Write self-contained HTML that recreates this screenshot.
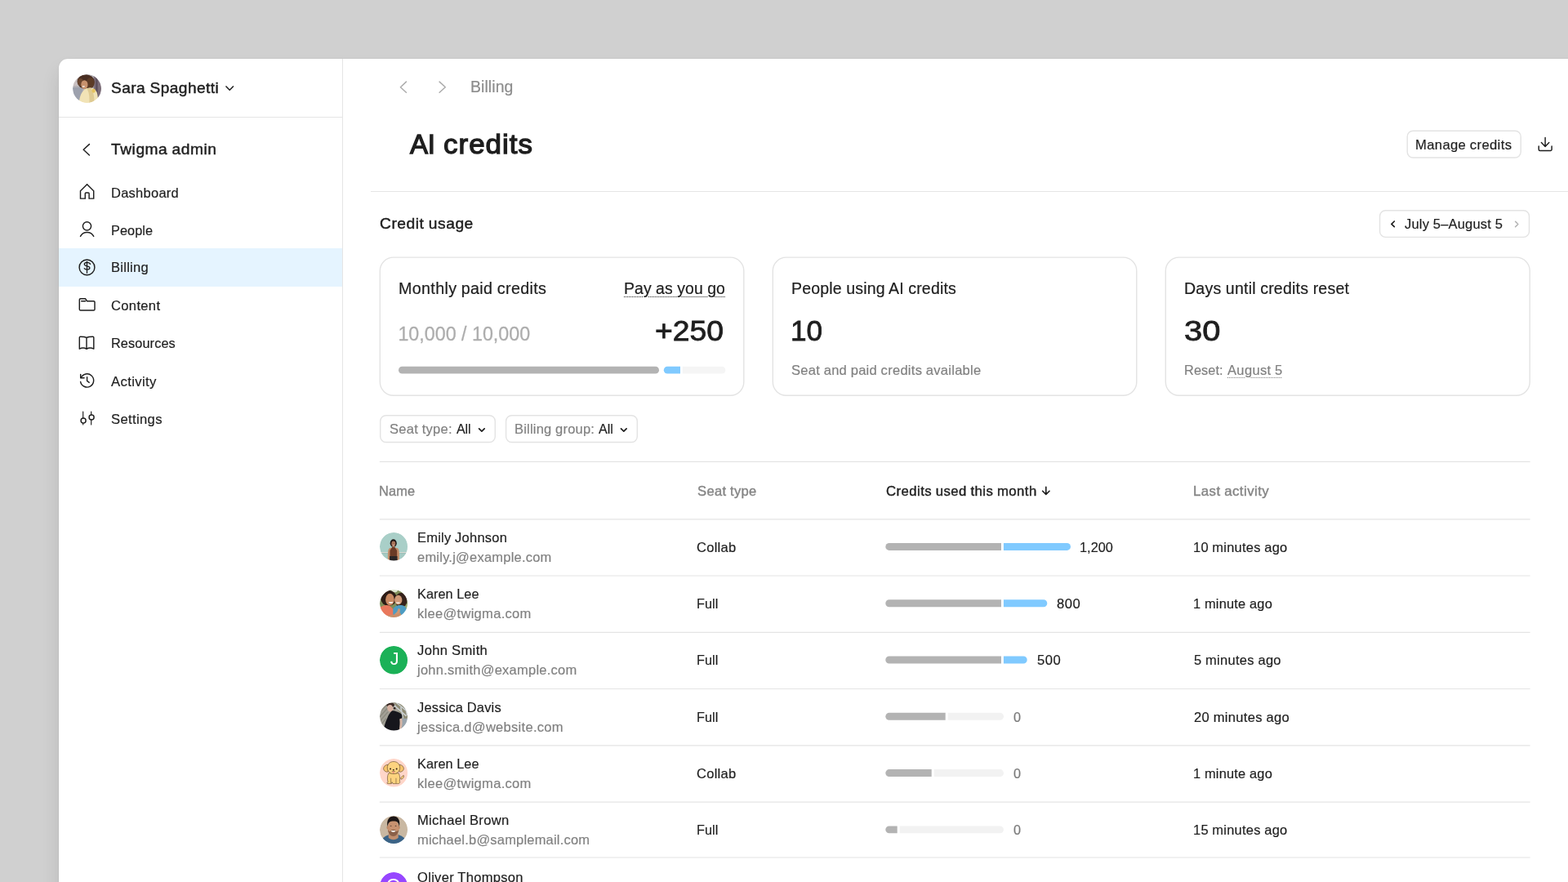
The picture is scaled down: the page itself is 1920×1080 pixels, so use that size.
<!DOCTYPE html>
<html lang="en">
<head>
<meta charset="utf-8">
<title>AI credits – Billing – Twigma admin</title>
<style>
*{box-sizing:border-box;margin:0;padding:0}
html,body{width:1920px;height:1080px;overflow:hidden;background:#d0d0d0}
body{font-family:"Liberation Sans",sans-serif;color:#1e1e1e;position:relative;-webkit-font-smoothing:antialiased}
#app{will-change:transform;position:absolute;left:0;top:0;width:1920px;height:1080px;overflow:hidden}
#app *{position:absolute}
.t{white-space:nowrap;line-height:1;font-weight:400;transform-origin:0 0}
.win{background:#fff;border-top-left-radius:11px;box-shadow:0 14px 22px rgba(0,0,0,.11),0 0 1.5px rgba(0,0,0,.14)}
.hl{background:#e5e5e5}
.vl{background:#e5e5e5}
.sel{background:#e5f4ff}
.btn{border:0;border-radius:6px;background:transparent;font:inherit;color:inherit;overflow:visible}
.card{border:1px solid #e6e6e6;border-radius:16px;background:#fff}
.av{border-radius:50%;overflow:hidden;display:block}
.bar{border-radius:5px}
svg{overflow:visible}
svg *{position:static}
.ic{fill:none;stroke:#1e1e1e;stroke-width:1.45;stroke-linecap:round;stroke-linejoin:round}
.bx{fill:#fff;stroke:#e3e3e3;stroke-width:1.4}
.ln{fill:none;stroke:#e4e4e4;stroke-width:1.2}
.cr{stroke:#ababab}
.u{text-decoration:underline dotted;text-decoration-thickness:1px;text-underline-offset:3px}
ul,li{list-style:none}
.g{left:0;top:0;width:1920px;height:1080px}
a{text-decoration:none;color:inherit}
h1,h2,h3{font-weight:400}
</style>
</head>
<body>
<div id="app">
<svg width="0" height="0" style="left:0;top:0"><defs><filter id="soft" x="-10%" y="-10%" width="120%" height="120%"><feGaussianBlur stdDeviation="0.45"/></filter></defs></svg>
<div class="win" style="left:72.00px;top:72.00px;width:1888.00px;height:1048.00px;"></div>
<aside class="g">
<div class="vl" style="left:419.00px;top:72.00px;width:1.00px;height:1008.00px;"></div>
<div class="hl" style="left:72.00px;top:143.00px;width:347.00px;height:1.00px;"></div>
<header class="g">
<svg class="av" role="img" aria-label="Sara Spaghetti" style="left:89.00px;top:90.50px;width:35.2px;height:35.2px" viewBox="0 0 35 35"><clipPath id="cSar108"><circle cx="17.5" cy="17.5" r="17.5"/></clipPath><g clip-path="url(#cSar108)"><g filter="url(#soft)"><rect x="-2" y="-2" width="39" height="39" fill="#b3afb4"/><rect x="-2" y="-2" width="14" height="16" fill="#c9c0c1"/><rect x="-2" y="16" width="14" height="21" fill="#9da1ad"/><rect x="25.500" y="-2" width="12" height="39" fill="#7b6d78"/><rect x="28" y="4" width="2.500" height="31" fill="#5d4f5c"/><ellipse cx="16" cy="9" rx="10.5" ry="8.8" fill="#4a2f22"/><ellipse cx="21.500" cy="10.500" rx="5" ry="6.500" fill="#5b3a28"/><ellipse cx="9.5" cy="9.5" rx="3.6" ry="4.6" fill="#6a452f"/><ellipse cx="14.300" cy="12.6" rx="4.1" ry="5.4" fill="#c8926e"/><ellipse cx="13.2" cy="14.8" rx="1.7" ry=".8" fill="#f3e6de"/><path d="M7.500 37 C8 27 11 20 17 17 C22 15.500 27 17 29.500 22 C31 27 31 32 30.500 37 Z" fill="#f1e3b6"/><path d="M17 17.500 C20 21 21 28 20 37 L26 37 C27 28 25 20 22 16.500 Z" fill="#dfcb93"/><ellipse cx="25.500" cy="20" rx="2.2" ry="2.6" fill="#e6c35e"/></g></g></svg>
<span class="t" style="left:136.43px;top:99.00px;font-size:18.6px;letter-spacing:0.426px;word-spacing:-0.426px;transform:scaleX(1.0287);-webkit-text-stroke:0.45px #1e1e1e;">Sara Spaghetti</span>
<svg class="ic" style="left:0;top:0;" width="1920" height="1080" viewBox="0 0 1920 1080"><path d="M277 105.9 L281.2 110.2 L285.4 105.9" stroke-width="1.5"/></svg>
</header>
<nav class="g">
<svg class="ic" style="left:0;top:0;" width="1920" height="1080" viewBox="0 0 1920 1080"><path d="M109.4 176.6 L102.2 183.3 L109.4 190"/></svg>
<h2 class="t" style="left:136.23px;top:174.00px;font-size:18.6px;letter-spacing:0.531px;word-spacing:-0.531px;transform:scaleX(1.0304);-webkit-text-stroke:0.45px #1e1e1e;">Twigma admin</h2>
<div class="sel" style="left:72.00px;top:304.30px;width:347.00px;height:46.30px;"></div>
<a class="t" style="left:135.78px;top:228.00px;font-size:16.2px;letter-spacing:0.259px;transform:scaleX(1.0182);-webkit-text-stroke:0.18px #1e1e1e;">Dashboard</a>
<a class="t" style="left:135.79px;top:274.00px;font-size:16.2px;letter-spacing:0.085px;transform:scaleX(1.0057);-webkit-text-stroke:0.18px #1e1e1e;">People</a>
<a class="t" style="left:135.78px;top:319.00px;font-size:16.2px;letter-spacing:0.237px;transform:scaleX(1.0234);-webkit-text-stroke:0.18px #1e1e1e;">Billing</a>
<a class="t" style="left:135.80px;top:366.00px;font-size:16.2px;letter-spacing:0.324px;transform:scaleX(1.0231);-webkit-text-stroke:0.18px #1e1e1e;">Content</a>
<a class="t" style="left:135.79px;top:412.00px;font-size:16.2px;letter-spacing:0.099px;transform:scaleX(1.0070);-webkit-text-stroke:0.18px #1e1e1e;">Resources</a>
<a class="t" style="left:135.80px;top:459.00px;font-size:16.2px;letter-spacing:0.348px;transform:scaleX(1.0320);-webkit-text-stroke:0.18px #1e1e1e;">Activity</a>
<a class="t" style="left:135.80px;top:505.00px;font-size:16.2px;letter-spacing:0.331px;transform:scaleX(1.0271);-webkit-text-stroke:0.18px #1e1e1e;">Settings</a>
<svg class="ic" style="left:0;top:0;" width="1920" height="1080" viewBox="0 0 1920 1080"><path d="M98.5 243.1 V233.7 L106.6 225.7 L114.7 233.7 V243.1 H109.1 V237 a1 1 0 0 0 -1 -1 h-2.800 a1 1 0 0 0 -1 1 V243.1 Z" stroke-linejoin="miter"/><circle cx="106.5" cy="276.8" r="5.1"/><path d="M98.500 289.3 A9.2 9.2 0 0 1 114.700 289.3"/><circle cx="106.5" cy="327.400" r="9.400"/><path d="M106.500 320.300 V334.300" stroke-width="1.300"/><path d="M110.600 323.500 C110.100 322.100 108.500 321.300 106.600 321.300 C104.600 321.300 103.300 322.200 103.300 323.500 C103.300 324.900 104.600 325.400 106.600 325.800 C108.600 326.200 109.900 326.800 109.900 328.100 C109.900 329.300 108.600 330.100 106.600 330.100 C105.100 330.100 103.800 329.600 103.200 328.700" stroke-width="1.300"/><path d="M97.300 367.100 a1.300 1.300 0 0 1 1.300 -1.300 h5.900 l2.100 2.900 h8.100 a1.300 1.300 0 0 1 1.300 1.300 v8.700 a1.300 1.300 0 0 1 -1.300 1.300 h-16.100 a1.300 1.300 0 0 1 -1.300 -1.300 Z"/><path d="M99.700 368.700 h4.800"/><path d="M106 413.500 C104.300 412.500 101.500 412.200 98.400 412.200 C97.700 412.200 97.300 412.600 97.300 413.300 V427.200 C100 425.700 103.500 425.700 106 427.300 C108.500 425.700 112 425.700 114.800 427.200 V413.300 C114.800 412.600 114.400 412.200 113.700 412.200 C110.600 412.200 107.700 412.500 106 413.500 Z M106 413.500 V427.300"/><path d="M99.2 462.6 A8.1 8.1 0 1 1 98.6 467.4"/><path d="M98.7 458.4 V462.8 H103.1"/><path d="M106.6 461.6 V466.4 L109.2 468.4"/><path d="M101.700 504 V512 M101.700 518.200 V520 M111.700 504 V507.800 M111.700 514 V520" stroke-width="1.150"/><circle cx="102.100" cy="515.100" r="3"/><circle cx="112.100" cy="510.900" r="3"/></svg>
</nav>
</aside>
<main class="g">
<svg class="ic cr" style="left:0;top:0;" width="1920" height="1080" viewBox="0 0 1920 1080"><path d="M497.4 100.1 L490.4 106.7 L497.4 113.3"/><path d="M538.1 100.1 L545.3 106.7 L538.1 113.3"/></svg>
<span class="t" style="left:575.80px;top:97.00px;font-size:19.3px;letter-spacing:0.087px;transform:scaleX(1.0070);color:#8c8c8c;-webkit-text-stroke:0.21px #8c8c8c;">Billing</span>
<h1 class="g"><span class="t" style="left:502.04px;top:160.00px;font-size:33.4px;letter-spacing:-0.406px;transform:scaleX(0.9912);-webkit-text-stroke:1.3px #1e1e1e;">AI</span> <span class="t" style="left:542.83px;top:160.00px;font-size:33.4px;letter-spacing:1.021px;transform:scaleX(1.0435);-webkit-text-stroke:1.3px #1e1e1e;">credits</span></h1>
<svg class="bx" style="left:0;top:0;" width="1920" height="1080" viewBox="0 0 1920 1080"><rect x="1723.2" y="160.3" width="139.00" height="32.75" rx="7"/></svg>
<button class="btn" style="left:1723.00px;top:160.00px;width:140.00px;height:33.00px;"><span class="t" style="left:10.47px;top:9.00px;font-size:16.2px;letter-spacing:0.353px;word-spacing:-0.353px;transform:scaleX(1.0264);-webkit-text-stroke:0.18px #1e1e1e;">Manage credits</span></button>
<svg class="ic" style="left:0;top:0;" width="1920" height="1080" viewBox="0 0 1920 1080"><path d="M1892.1 168.5 V179.4 M1887.4 174.6 L1892.1 179.4 L1896.8 174.6"/><path d="M1884.2 178.9 V183 a1.5 1.5 0 0 0 1.5 1.5 H1898.6 a1.5 1.5 0 0 0 1.5 -1.5 V178.9"/></svg>
<div class="hl" style="left:454.00px;top:234.00px;width:1466.00px;height:1.00px;"></div>
<h2 class="t" style="left:465.03px;top:265.00px;font-size:18.6px;letter-spacing:0.515px;word-spacing:-0.515px;transform:scaleX(1.0336);-webkit-text-stroke:0.45px #1e1e1e;">Credit usage</h2>
<svg class="bx" style="left:0;top:0;" width="1920" height="1080" viewBox="0 0 1920 1080"><rect x="1689.55" y="257.8" width="182.95" height="32.60" rx="7"/></svg>
<div class="btn" style="left:1689.00px;top:257.00px;width:184.00px;height:34.00px;"><span class="t" style="left:31.49px;top:9.00px;font-size:16.2px;letter-spacing:0.228px;word-spacing:-0.228px;transform:scaleX(1.0161);-webkit-text-stroke:0.18px #1e1e1e;">July 5–August 5</span></div>
<svg class="ic" style="left:0;top:0;" width="1920" height="1080" viewBox="0 0 1920 1080"><path d="M1707.3 271 L1703.9 274.3 L1707.3 277.6" stroke-width="1.7"/><path d="M1855.6 271.3 L1858.8 274.5 L1855.6 277.7" stroke-width="1.6" stroke="#b3b3b3"/></svg>
<svg class="bx" style="left:0;top:0;" width="1920" height="1080" viewBox="0 0 1920 1080"><rect x="465.30" y="315.10" width="445.50" height="169.20" rx="16.5"/><rect x="946.30" y="315.10" width="445.50" height="169.20" rx="16.5"/><rect x="1427.30" y="315.10" width="445.90" height="169.20" rx="16.5"/></svg>
<span class="t" style="left:488.18px;top:344.00px;font-size:19.3px;letter-spacing:0.323px;word-spacing:-0.323px;transform:scaleX(1.0220);-webkit-text-stroke:0.21px #1e1e1e;">Monthly paid credits</span>
<span class="t u" style="left:763.80px;top:344.00px;font-size:19.3px;letter-spacing:0.107px;word-spacing:-0.107px;transform:scaleX(1.0054);-webkit-text-stroke:0.21px #1e1e1e;">Pay as you go</span>
<span class="t" style="left:487.43px;top:398.00px;font-size:23.3px;letter-spacing:-0.017px;word-spacing:0.017px;color:#adadad;-webkit-text-stroke:0.26px #adadad;">10,000 / 10,000</span>
<span class="t" style="left:801.88px;top:388.00px;font-size:35.9px;transform:scaleX(1.0391);-webkit-text-stroke:0.8px #1e1e1e;">+250</span>
<svg class="bars" style="left:0;top:0;" width="1920" height="1080" viewBox="0 0 1920 1080"><path d="M492.35 448.80 H802.65 A4.35 4.35 0 0 1 802.65 457.50 H492.35 A4.35 4.35 0 0 1 492.35 448.80 Z" fill="#b3b3b3"/><path d="M835.80 448.80 H883.95 A4.35 4.35 0 0 1 883.95 457.50 H835.80 V448.80 Z" fill="#f5f5f5"/><path d="M817.15 448.80 H833.00 V457.50 H817.15 A4.35 4.35 0 0 1 817.15 448.80 Z" fill="#80caff"/></svg>
<span class="t" style="left:969.19px;top:344.00px;font-size:19.3px;letter-spacing:0.176px;word-spacing:-0.176px;transform:scaleX(1.0115);-webkit-text-stroke:0.21px #1e1e1e;">People using AI credits</span>
<span class="t" style="left:968.13px;top:388.00px;font-size:35.9px;transform:scaleX(0.9799);-webkit-text-stroke:0.8px #1e1e1e;">10</span>
<span class="t" style="left:969.39px;top:445.00px;font-size:16.2px;letter-spacing:0.265px;word-spacing:-0.265px;transform:scaleX(1.0213);color:#808080;-webkit-text-stroke:0.18px #808080;">Seat and paid credits available</span>
<span class="t" style="left:1450.29px;top:344.00px;font-size:19.3px;letter-spacing:0.205px;word-spacing:-0.205px;transform:scaleX(1.0142);-webkit-text-stroke:0.21px #1e1e1e;">Days until credits reset</span>
<span class="t" style="left:1450.23px;top:388.00px;font-size:35.9px;transform:scaleX(1.1120);-webkit-text-stroke:0.8px #1e1e1e;">30</span>
<span class="t" style="left:1449.78px;top:445.00px;font-size:16.2px;letter-spacing:0.099px;transform:scaleX(1.0073);color:#808080;-webkit-text-stroke:0.18px #808080;">Reset:</span>
<span class="t u" style="left:1503.39px;top:445.00px;font-size:16.2px;letter-spacing:0.326px;word-spacing:-0.326px;transform:scaleX(1.0208);color:#808080;-webkit-text-stroke:0.18px #808080;">August 5</span>
<svg class="bx" style="left:0;top:0;" width="1920" height="1080" viewBox="0 0 1920 1080"><rect x="465.7" y="508.7" width="140.60" height="32.80" rx="7"/><rect x="619.6" y="508.7" width="160.70" height="32.80" rx="7"/></svg>
<button class="btn" style="left:465.00px;top:508.00px;width:142.00px;height:34.00px;"><span class="t" style="left:11.79px;top:9.00px;font-size:16.2px;letter-spacing:0.274px;word-spacing:-0.274px;transform:scaleX(1.0205);color:#808080;-webkit-text-stroke:0.18px #808080;">Seat type:</span> <span class="t" style="left:93.79px;top:9.00px;font-size:16.2px;letter-spacing:-0.144px;transform:scaleX(0.9892);-webkit-text-stroke:0.18px #1e1e1e;">All</span></button>
<button class="btn" style="left:619.00px;top:508.00px;width:162.00px;height:34.00px;"><span class="t" style="left:10.87px;top:9.00px;font-size:16.2px;letter-spacing:0.208px;word-spacing:-0.208px;transform:scaleX(1.0184);color:#808080;-webkit-text-stroke:0.18px #808080;">Billing group:</span> <span class="t" style="left:114.39px;top:9.00px;font-size:16.2px;letter-spacing:-0.082px;transform:scaleX(0.9938);-webkit-text-stroke:0.18px #1e1e1e;">All</span></button>
<svg class="ic" style="left:0;top:0;" width="1920" height="1080" viewBox="0 0 1920 1080"><path d="M586.600 524.9 L589.900 528.2 L593.200 524.9" stroke-width="1.700"/><path d="M760.500 524.9 L763.800 528.2 L767.100 524.9" stroke-width="1.700"/></svg>
<svg class="ln" style="left:0;top:0;" width="1920" height="1080" viewBox="0 0 1920 1080"><path d="M464.8 565.3 H1873.6" /><path d="M464.8 635.83 H1873.6"/><path d="M464.8 705.00 H1873.6"/><path d="M464.8 774.40 H1873.6"/><path d="M464.8 843.50 H1873.6"/><path d="M464.8 912.90 H1873.6"/><path d="M464.8 982.10 H1873.6"/><path d="M464.8 1050.00 H1873.6"/></svg>
<div class="g" role="table">
<div class="g" role="row">
<span class="t" style="left:464.49px;top:593.00px;font-size:16.2px;letter-spacing:0.165px;transform:scaleX(1.0078);color:#858585;-webkit-text-stroke:0.39px #858585;">Name</span>
<span class="t" style="left:854.20px;top:593.00px;font-size:16.2px;letter-spacing:0.328px;word-spacing:-0.328px;transform:scaleX(1.0228);color:#858585;-webkit-text-stroke:0.39px #858585;">Seat type</span>
<span class="t" style="left:1085.20px;top:593.00px;font-size:16.2px;letter-spacing:0.433px;word-spacing:-0.433px;transform:scaleX(1.0334);-webkit-text-stroke:0.39px #1e1e1e;">Credits used this month</span>
<svg class="ic" style="left:0;top:0;" width="1920" height="1080" viewBox="0 0 1920 1080"><path d="M1280.800 596.300 V605.300 M1276.600 601.200 L1280.800 605.400 L1285 601.200" stroke-width="1.600"/></svg>
<span class="t" style="left:1461.46px;top:593.00px;font-size:16.2px;letter-spacing:0.428px;word-spacing:-0.428px;transform:scaleX(1.0384);color:#858585;-webkit-text-stroke:0.39px #858585;">Last activity</span>
</div>
<div class="g" role="row">
<svg class="av" role="img" aria-label="Emily" style="left:464.85px;top:652.38px;width:34.6px;height:34.6px" viewBox="0 0 35 35"><clipPath id="cEmi669"><circle cx="17.5" cy="17.5" r="17.5"/></clipPath><g clip-path="url(#cEmi669)"><g filter="url(#soft)"><rect x="-2" y="-2" width="39" height="39" fill="#a9cfc8"/><rect x="-2" y="24.300" width="39" height=".9" fill="#eadfd9"/><rect x="-2" y="25.200" width="39" height=".8" fill="#8eb3ab"/><rect x="-2" y="26" width="39" height="11" fill="#a5cac3"/><path d="M10.200 36 C9.8 28 9.8 22 11.5 20 C13 18.700 15 18.600 17 18.600 C19 18.600 21.500 18.700 22.800 20 C24.500 22 24.300 28 24 36 Z" fill="#c38c68"/><ellipse cx="16.900" cy="13.300" rx="4.100" ry="4.900" fill="#1f1714"/><ellipse cx="17" cy="14" rx="2.500" ry="3.300" fill="#a8745a"/><ellipse cx="17" cy="15.700" rx="1.200" ry=".5" fill="#ecd9cf"/><rect x="15.700" y="16.500" width="2.600" height="3" fill="#b07a5c"/><path d="M12.600 29.800 V22.500 C13.500 21 14.800 19.500 15.300 18.300 H18.700 C19.200 19.500 20.500 21 21.400 22.500 V29.800 Z" fill="#6b3a28"/><path d="M12.200 29.400 H21.700 L22 36 H12 Z" fill="#2a2726"/></g></g></svg>
<span class="t" style="left:511.08px;top:650.00px;font-size:16.2px;letter-spacing:0.244px;word-spacing:-0.244px;transform:scaleX(1.0176);-webkit-text-stroke:0.18px #1e1e1e;">Emily Johnson</span>
<span class="t" style="left:511.10px;top:674.00px;font-size:16.2px;letter-spacing:0.227px;transform:scaleX(1.0177);color:#808080;-webkit-text-stroke:0.18px #808080;">emily.j@example.com</span>
<span class="t" style="left:853.40px;top:662.00px;font-size:16.2px;letter-spacing:0.273px;transform:scaleX(1.0202);-webkit-text-stroke:0.18px #1e1e1e;">Collab</span>
<svg class="bars" style="left:0;top:0;" width="1920" height="1080" viewBox="0 0 1920 1080"><path d="M1088.75 665.03 H1226.00 V673.93 H1088.75 A4.45 4.45 0 0 1 1088.75 665.03 Z" fill="#b3b3b3"/><path d="M1228.90 665.03 H1306.55 A4.45 4.45 0 0 1 1306.55 673.93 H1228.90 V665.03 Z" fill="#80caff"/></svg>
<span class="t" style="left:1322.39px;top:662.00px;font-size:16.2px;letter-spacing:0.047px;transform:scaleX(1.0032);-webkit-text-stroke:0.18px #1e1e1e;">1,200</span>
<span class="t" style="left:1461.37px;top:662.00px;font-size:16.2px;letter-spacing:0.243px;word-spacing:-0.243px;transform:scaleX(1.0165);-webkit-text-stroke:0.18px #1e1e1e;">10 minutes ago</span>
</div>
<div class="g" role="row">
<svg class="av" role="img" aria-label="Karen" style="left:464.85px;top:721.65px;width:34.6px;height:34.6px" viewBox="0 0 35 35"><clipPath id="cKar738"><circle cx="17.5" cy="17.5" r="17.5"/></clipPath><g clip-path="url(#cKar738)"><g filter="url(#soft)"><rect x="-2" y="-2" width="39" height="39" fill="#7f8f5a"/><ellipse cx="18" cy="1" rx="4" ry="2.500" fill="#dfe6d0"/><ellipse cx="31" cy="24" rx="5" ry="8" fill="#97a56f"/><ellipse cx="11" cy="10.500" rx="9.800" ry="9.800" fill="#2e1f18"/><ellipse cx="26.500" cy="13" rx="7.600" ry="9.200" fill="#35241b"/><ellipse cx="12.600" cy="12.300" rx="5.400" ry="7.400" fill="#c98a63"/><ellipse cx="23" cy="12.800" rx="4.700" ry="6" fill="#d09a78"/><path d="M10.800 15.300 H16.600 C16.300 17.800 11.600 17.800 10.800 15.300 Z" fill="#f7f1ec"/><path d="M20 15.600 H25.200 C24.800 17.700 20.600 17.700 20 15.600 Z" fill="#f7f1ec"/><path d="M-1 36 V23 C3 19.500 8 18.300 12 19.800 L17.600 25 V36 Z" fill="#e9785c"/><path d="M16.500 36 V24 C18 20.500 24 18.300 29 19.800 C32 21 34 25 35 29 L30 36 Z" fill="#4d9cc2"/><path d="M24.800 23.500 C26 26 25 30 22 32.500 L18 30.500 C21 28.500 22.600 26 22.800 23.500 Z" fill="#cf9773"/><path d="M5 34 C10 30.500 18 31.500 25.500 28.800 L27 32 C22 35 14 36 8 36.500 Z" fill="#c98f6b"/></g></g></svg>
<span class="t" style="left:511.10px;top:719.00px;font-size:16.2px;letter-spacing:0.069px;word-spacing:-0.069px;transform:scaleX(1.0044);-webkit-text-stroke:0.18px #1e1e1e;">Karen Lee</span>
<span class="t" style="left:511.08px;top:743.00px;font-size:16.2px;letter-spacing:0.286px;transform:scaleX(1.0208);color:#808080;-webkit-text-stroke:0.18px #808080;">klee@twigma.com</span>
<span class="t" style="left:853.40px;top:731.00px;font-size:16.2px;letter-spacing:0.064px;transform:scaleX(1.0052);-webkit-text-stroke:0.18px #1e1e1e;">Full</span>
<svg class="bars" style="left:0;top:0;" width="1920" height="1080" viewBox="0 0 1920 1080"><path d="M1088.75 734.30 H1226.00 V743.20 H1088.75 A4.45 4.45 0 0 1 1088.75 734.30 Z" fill="#b3b3b3"/><path d="M1228.90 734.30 H1277.85 A4.45 4.45 0 0 1 1277.85 743.20 H1228.90 V734.30 Z" fill="#80caff"/></svg>
<span class="t" style="left:1294.39px;top:731.00px;font-size:16.2px;letter-spacing:0.530px;transform:scaleX(1.0267);-webkit-text-stroke:0.18px #1e1e1e;">800</span>
<span class="t" style="left:1461.38px;top:731.00px;font-size:16.2px;letter-spacing:0.212px;word-spacing:-0.212px;transform:scaleX(1.0139);-webkit-text-stroke:0.18px #1e1e1e;">1 minute ago</span>
</div>
<div class="g" role="row">
<svg class="av" role="img" aria-label="John" style="left:464.85px;top:790.92px;width:34.6px;height:34.6px" viewBox="0 0 35 35"><clipPath id="cJoh808"><circle cx="17.5" cy="17.5" r="17.5"/></clipPath><g clip-path="url(#cJoh808)"><rect x="-2" y="-2" width="39" height="39" fill="#1bb157"/></g></svg><span class="t" style="left:477.70px;top:796.00px;font-size:21.6px;color:#ffffff;">J</span>
<span class="t" style="left:511.10px;top:788.00px;font-size:16.2px;letter-spacing:0.354px;word-spacing:-0.354px;transform:scaleX(1.0241);-webkit-text-stroke:0.18px #1e1e1e;">John Smith</span>
<span class="t" style="left:511.12px;top:812.00px;font-size:16.2px;letter-spacing:0.247px;transform:scaleX(1.0189);color:#808080;-webkit-text-stroke:0.18px #808080;">john.smith@example.com</span>
<span class="t" style="left:853.40px;top:800.00px;font-size:16.2px;letter-spacing:0.064px;transform:scaleX(1.0052);-webkit-text-stroke:0.18px #1e1e1e;">Full</span>
<svg class="bars" style="left:0;top:0;" width="1920" height="1080" viewBox="0 0 1920 1080"><path d="M1088.75 803.57 H1226.00 V812.47 H1088.75 A4.45 4.45 0 0 1 1088.75 803.57 Z" fill="#b3b3b3"/><path d="M1228.90 803.57 H1253.25 A4.45 4.45 0 0 1 1253.25 812.47 H1228.90 V803.57 Z" fill="#80caff"/></svg>
<span class="t" style="left:1270.09px;top:800.00px;font-size:16.2px;letter-spacing:0.530px;transform:scaleX(1.0267);-webkit-text-stroke:0.18px #1e1e1e;">500</span>
<span class="t" style="left:1462.39px;top:800.00px;font-size:16.2px;letter-spacing:0.285px;word-spacing:-0.285px;transform:scaleX(1.0190);-webkit-text-stroke:0.18px #1e1e1e;">5 minutes ago</span>
</div>
<div class="g" role="row">
<svg class="av" role="img" aria-label="Jessica" style="left:464.85px;top:860.19px;width:34.6px;height:34.6px" viewBox="0 0 35 35"><clipPath id="cJes877"><circle cx="17.5" cy="17.5" r="17.5"/></clipPath><g clip-path="url(#cJes877)"><g filter="url(#soft)"><rect x="-2" y="-2" width="39" height="39" fill="#a3a197"/><path d="M-2 8 L10 -2 H-2 Z" fill="#c9c8bf"/><path d="M-2 14 L14 -2 M-2 20 L18 -2 M-2 26 L10 12 M-2 32 L8 20" stroke="#8b897e" stroke-width="1.300" fill="none"/><path d="M17 -2 H37 V22 L30 24 Z" fill="#8f8c74"/><path d="M20 0 L35 12 M24 -2 L37 8 M18 4 L33 17 M26 6 L29 20 M31 2 L34 16" stroke="#c9ced0" stroke-width="1.600" fill="none"/><path d="M27 20 H37 V37 H24 Z" fill="#9aa5ad"/><ellipse cx="13.300" cy="3.300" rx="4.800" ry="2.800" fill="#3a2b26"/><circle cx="18.400" cy="7.300" r="1.300" fill="#2c201c"/><ellipse cx="12.900" cy="7.300" rx="3.500" ry="4.300" transform="rotate(-18 12.900 7.300)" fill="#d8b3a3"/><path d="M15.200 10.300 C18 10 24 12 26.700 14.400 C28 16 28 18.500 27.200 20 L24.800 21 C25.500 26 25 31 23.900 37 H4 C5 31 7 24 9.400 19.400 C10.500 16 12.500 12.800 15.200 10.300 Z" fill="#15171c"/><path d="M24.800 20.600 L27.400 19.800 C28.300 24 28 29 26.500 33 L24.300 34 C25 29 25.200 25 24.800 20.600 Z" fill="#d8b7a6"/></g></g></svg>
<span class="t" style="left:511.10px;top:858.00px;font-size:16.2px;letter-spacing:0.196px;word-spacing:-0.196px;transform:scaleX(1.0148);-webkit-text-stroke:0.18px #1e1e1e;">Jessica Davis</span>
<span class="t" style="left:511.12px;top:882.00px;font-size:16.2px;letter-spacing:0.271px;transform:scaleX(1.0217);color:#808080;-webkit-text-stroke:0.18px #808080;">jessica.d@website.com</span>
<span class="t" style="left:853.40px;top:870.00px;font-size:16.2px;letter-spacing:0.064px;transform:scaleX(1.0052);-webkit-text-stroke:0.18px #1e1e1e;">Full</span>
<svg class="bars" style="left:0;top:0;" width="1920" height="1080" viewBox="0 0 1920 1080"><path d="M1088.75 872.84 H1157.70 V881.74 H1088.75 A4.45 4.45 0 0 1 1088.75 872.84 Z" fill="#b3b3b3"/><path d="M1160.70 872.84 H1224.55 A4.45 4.45 0 0 1 1224.55 881.74 H1160.70 V872.84 Z" fill="#f2f2f2"/></svg>
<span class="t" style="left:1241.09px;top:870.00px;font-size:16.2px;color:#7a7a7a;-webkit-text-stroke:0.18px #7a7a7a;">0</span>
<span class="t" style="left:1462.39px;top:870.00px;font-size:16.2px;letter-spacing:0.327px;word-spacing:-0.327px;transform:scaleX(1.0221);-webkit-text-stroke:0.18px #1e1e1e;">20 minutes ago</span>
</div>
<div class="g" role="row">
<svg class="av" role="img" aria-label="Puppy" style="left:464.85px;top:929.46px;width:34.6px;height:34.6px" viewBox="0 0 35 35"><clipPath id="cPup946"><circle cx="17.5" cy="17.5" r="17.5"/></clipPath><g clip-path="url(#cPup946)"><rect x="-2" y="-2" width="39" height="39" fill="#ffd6c9"/><g stroke="#4a3520" stroke-width=".55" stroke-linejoin="round"><path d="M26.300 25.500 C29 25 30.300 22.800 29.700 20.800 C28.300 21 27 22.500 26 24 Z" fill="#fdd37f"/><path d="M11 18 C9.200 21 9.200 26 10.200 29 C9 29.300 8.700 30.600 9.800 31 H14.500 L15.200 29 L16.300 31 H22.800 C24.500 31 25.500 29.500 24.600 27.500 C25.300 24 24.800 20.500 23.500 18 Z" fill="#fdd37f"/><path d="M10.200 7.500 C7 7.300 4.500 10 4.600 12.800 C5.500 15.500 8 17 10.300 16.200 C10.800 13 10.800 10 10.200 7.500 Z" fill="#f7c56e"/><path d="M24.200 7.500 C27.400 7.300 29.900 10 29.800 12.800 C28.900 15.500 26.400 17 24.100 16.200 C23.600 13 23.600 10 24.200 7.500 Z" fill="#f7c56e"/><path d="M17.200 3.600 C22 3.600 25 7 25 11.200 C25 15.800 21.500 18.800 17.200 18.800 C12.900 18.800 9.400 15.800 9.400 11.200 C9.400 7 12.400 3.600 17.200 3.600 Z" fill="#fdd37f"/></g><circle cx="13.200" cy="12.700" r=".95" fill="#2b1c10"/><circle cx="20.900" cy="12.700" r=".95" fill="#2b1c10"/><ellipse cx="17" cy="13.800" rx="1.100" ry=".75" fill="#2b1c10"/><path d="M14.800 15.300 C15.500 16.300 16.500 16.300 17 15 C17.500 16.300 18.500 16.300 19.200 15.300" stroke="#4a3520" stroke-width=".5" fill="none"/><ellipse cx="17" cy="17" rx="1.300" ry="1" fill="#f28b82"/><path d="M13.800 24 V30.500 M20.200 24 V30.500" stroke="#4a3520" stroke-width=".5" fill="none"/></g></svg>
<span class="t" style="left:511.10px;top:927.00px;font-size:16.2px;letter-spacing:0.069px;word-spacing:-0.069px;transform:scaleX(1.0044);-webkit-text-stroke:0.18px #1e1e1e;">Karen Lee</span>
<span class="t" style="left:511.08px;top:951.00px;font-size:16.2px;letter-spacing:0.286px;transform:scaleX(1.0208);color:#808080;-webkit-text-stroke:0.18px #808080;">klee@twigma.com</span>
<span class="t" style="left:853.40px;top:939.00px;font-size:16.2px;letter-spacing:0.273px;transform:scaleX(1.0202);-webkit-text-stroke:0.18px #1e1e1e;">Collab</span>
<svg class="bars" style="left:0;top:0;" width="1920" height="1080" viewBox="0 0 1920 1080"><path d="M1088.75 942.11 H1140.70 V951.01 H1088.75 A4.45 4.45 0 0 1 1088.75 942.11 Z" fill="#b3b3b3"/><path d="M1143.70 942.11 H1224.55 A4.45 4.45 0 0 1 1224.55 951.01 H1143.70 V942.11 Z" fill="#f2f2f2"/></svg>
<span class="t" style="left:1241.09px;top:939.00px;font-size:16.2px;color:#7a7a7a;-webkit-text-stroke:0.18px #7a7a7a;">0</span>
<span class="t" style="left:1461.38px;top:939.00px;font-size:16.2px;letter-spacing:0.212px;word-spacing:-0.212px;transform:scaleX(1.0139);-webkit-text-stroke:0.18px #1e1e1e;">1 minute ago</span>
</div>
<div class="g" role="row">
<svg class="av" role="img" aria-label="Michael" style="left:464.85px;top:998.73px;width:34.6px;height:34.6px" viewBox="0 0 35 35"><clipPath id="cMic1016"><circle cx="17.5" cy="17.5" r="17.5"/></clipPath><g clip-path="url(#cMic1016)"><g filter="url(#soft)"><rect x="-2" y="-2" width="39" height="39" fill="#c9b8a2"/><path d="M-1 37 C1 29 6 25 11 23.500 H23.500 C28.500 25 33.500 29 36 37 Z" fill="#3a6386"/><path d="M10.800 22 H23 V27 C20.500 30.300 13.300 30.300 10.800 27 Z" fill="#c08e6e"/><ellipse cx="16.800" cy="15" rx="7.100" ry="9.400" fill="#c8926f"/><ellipse cx="9.600" cy="14.500" rx="1" ry="2" fill="#bd8866"/><ellipse cx="24" cy="14.500" rx="1" ry="2" fill="#bd8866"/><path d="M9.600 13.500 C8 5 12 .6 17 .6 C22 .6 26 5 24.200 13.500 C23.500 9.500 22.500 7.300 20 6.800 C17 6.300 13.500 6.600 11.800 8 C10.500 9.300 10 11 9.600 13.500 Z" fill="#1f1612"/><path d="M10 16.500 C10.300 22.500 13.500 25.300 16.800 25.300 C20.100 25.300 23.300 22.500 23.600 16.500 C22.500 19.500 21 20.500 19.500 17.600 C18 16.800 15.600 16.800 14.100 17.600 C12.600 20.500 11.100 19.500 10 16.500 Z" fill="#8a6048"/><path d="M13.800 18.300 H19.800 C19.300 20.800 14.300 20.800 13.800 18.300 Z" fill="#f6f0ea"/><ellipse cx="13.800" cy="12.300" rx="1.100" ry=".5" fill="#3b2a22"/><ellipse cx="19.800" cy="12.300" rx="1.100" ry=".5" fill="#3b2a22"/></g></g></svg>
<span class="t" style="left:511.08px;top:996.00px;font-size:16.2px;letter-spacing:0.317px;word-spacing:-0.317px;transform:scaleX(1.0228);-webkit-text-stroke:0.18px #1e1e1e;">Michael Brown</span>
<span class="t" style="left:511.08px;top:1020.00px;font-size:16.2px;letter-spacing:0.214px;transform:scaleX(1.0166);color:#808080;-webkit-text-stroke:0.18px #808080;">michael.b@samplemail.com</span>
<span class="t" style="left:853.40px;top:1008.00px;font-size:16.2px;letter-spacing:0.064px;transform:scaleX(1.0052);-webkit-text-stroke:0.18px #1e1e1e;">Full</span>
<svg class="bars" style="left:0;top:0;" width="1920" height="1080" viewBox="0 0 1920 1080"><path d="M1088.75 1011.38 H1098.70 V1020.28 H1088.75 A4.45 4.45 0 0 1 1088.75 1011.38 Z" fill="#b3b3b3"/><path d="M1101.70 1011.38 H1224.55 A4.45 4.45 0 0 1 1224.55 1020.28 H1101.70 V1011.38 Z" fill="#f2f2f2"/></svg>
<span class="t" style="left:1241.09px;top:1008.00px;font-size:16.2px;color:#7a7a7a;-webkit-text-stroke:0.18px #7a7a7a;">0</span>
<span class="t" style="left:1461.37px;top:1008.00px;font-size:16.2px;letter-spacing:0.243px;word-spacing:-0.243px;transform:scaleX(1.0165);-webkit-text-stroke:0.18px #1e1e1e;">15 minutes ago</span>
</div>
<div class="g" role="row">
<svg class="av" role="img" aria-label="Oliver" style="left:464.85px;top:1068.00px;width:34.6px;height:34.6px" viewBox="0 0 35 35"><clipPath id="cOli1085"><circle cx="17.5" cy="17.5" r="17.5"/></clipPath><g clip-path="url(#cOli1085)"><rect x="-2" y="-2" width="39" height="39" fill="#9747ff"/></g></svg><span class="t" style="left:473.37px;top:1073.00px;font-size:21.6px;transform:scaleX(1.0333);color:#ffffff;">O</span>
<span class="t" style="left:511.10px;top:1066.00px;font-size:16.2px;letter-spacing:0.297px;word-spacing:-0.297px;transform:scaleX(1.0214);-webkit-text-stroke:0.18px #1e1e1e;">Oliver Thompson</span>
<span class="t" style="left:511.10px;top:1089.00px;font-size:16.2px;letter-spacing:0.302px;transform:scaleX(1.0247);color:#808080;-webkit-text-stroke:0.18px #808080;">oliver.t@example.com</span>
<span class="t" style="left:853.41px;top:1078.00px;font-size:16.2px;letter-spacing:-0.361px;transform:scaleX(0.9836);-webkit-text-stroke:0.18px #1e1e1e;">Dev</span>
<svg class="bars" style="left:0;top:0;" width="1920" height="1080" viewBox="0 0 1920 1080"><path d="M1088.75 1080.65 H1092.00 V1089.55 H1088.75 A4.45 4.45 0 0 1 1088.75 1080.65 Z" fill="#b3b3b3"/><path d="M1095.00 1080.65 H1224.55 A4.45 4.45 0 0 1 1224.55 1089.55 H1095.00 V1080.65 Z" fill="#f2f2f2"/></svg>
<span class="t" style="left:1241.09px;top:1078.00px;font-size:16.2px;color:#7a7a7a;-webkit-text-stroke:0.18px #7a7a7a;">0</span>
<span class="t" style="left:1462.39px;top:1078.00px;font-size:16.2px;letter-spacing:0.259px;word-spacing:-0.259px;transform:scaleX(1.0174);-webkit-text-stroke:0.18px #1e1e1e;">45 minutes ago</span>
</div>
</div>
</main>
</div>
</body>
</html>
